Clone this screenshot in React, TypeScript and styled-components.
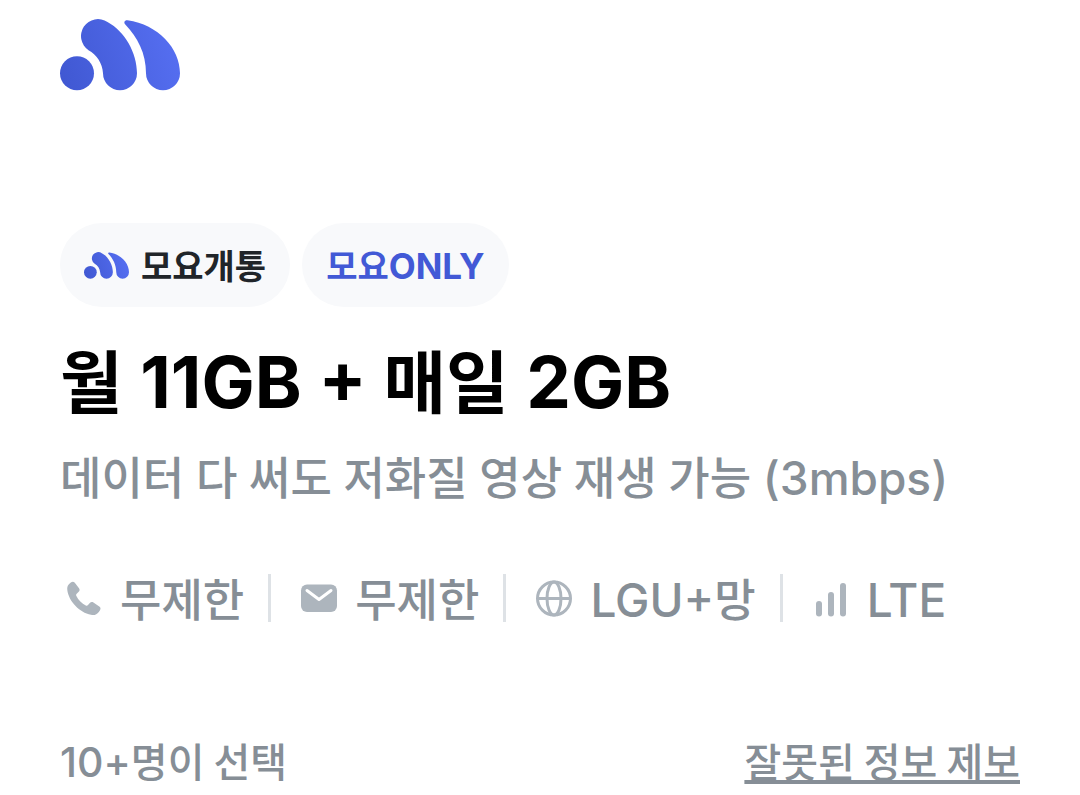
import React, { useId } from "react";
import styled, { createGlobalStyle } from "styled-components";

const color = {
  text: "#212529",
  muted: "#868e96",
  icon: "#adb5bd",
  line: "#dee2e6",
  surface: "#f8f9fb",
  brand: "#4259d6",
};

const GlobalStyle = createGlobalStyle`
  * { box-sizing: border-box; }
  body {
    margin: 0;
    background: #fff;
    color: ${color.text};
    font-family: "Noto Sans CJK KR", sans-serif;
  }
`;

const Page = styled.main`
  padding: 19px 60px 0;
`;

const Header = styled.header`
  display: flex;
  height: 72px;
  margin-bottom: 132px;
`;

const Badges = styled.div`
  display: flex;
  gap: 12px;
  margin-bottom: 27px;
`;

const Badge = styled.span<{ $brand?: boolean }>`
  display: flex;
  align-items: center;
  gap: 12px;
  height: 84px;
  padding: 0 24px;
  border-radius: 42px;
  background: ${color.surface};
  color: ${(p) => (p.$brand ? color.brand : color.text)};
  font-size: 34px;
  font-weight: 700;
  line-height: 48px;
  white-space: nowrap;
`;

const Latin = styled.span<{ $size: number }>`
  font-family: Inter, "Noto Sans CJK KR", sans-serif;
  font-size: ${(p) => p.$size}px;
  line-height: 1;
`;

const Title = styled.h1`
  margin: 0 0 12px;
  color: #000;
  font-family: "Open Sans", "Noto Sans CJK KR", sans-serif;
  font-size: 68px;
  font-weight: 700;
  line-height: 96px;
`;

const Description = styled.p`
  margin: 0 0 48px;
  color: ${color.muted};
  font-family: "Open Sans", "Noto Sans CJK KR", sans-serif;
  font-size: 45px;
  font-weight: 500;
  line-height: 72px;
`;

const Specs = styled.ul`
  display: flex;
  align-items: center;
  margin: 0 0 96px;
  padding: 0;
  list-style: none;
`;

const Spec = styled.li`
  display: flex;
  align-items: center;
  gap: 12px;
  color: ${color.muted};
  font-size: 45px;
  font-weight: 500;
  line-height: 72px;
  white-space: nowrap;

  & + &::before {
    content: "";
    width: 3px;
    height: 48px;
    margin: 0 12px 0 24px;
    background: ${color.line};
  }
`;

const Footer = styled.footer`
  display: flex;
  justify-content: space-between;
  color: ${color.muted};
  font-size: 40px;
  font-weight: 500;
  line-height: 60px;
`;

const ReportLink = styled.a`
  color: inherit;
  text-decoration: underline;
  text-decoration-thickness: 4px;
  text-decoration-skip-ink: none;
  text-underline-offset: 3px;
`;

function Logo({ width, height }: { width: number; height: number }) {
  const id = useId();
  return (
    <svg width={width} height={height} viewBox="0 0 120 72" role="img" aria-label="모요">
      <defs>
        <linearGradient id={id} gradientUnits="userSpaceOnUse" x1="0" y1="60" x2="120" y2="20">
          <stop offset="0" stopColor="#4058d2" />
          <stop offset="1" stopColor="#566ff2" />
        </linearGradient>
      </defs>
      <g fill={`url(#${id})`}>
        <circle cx="17" cy="54.3" r="17" />
        <path d="M43 54.3C42.5 44 36.5 35.5 28.5 31.2A17 17 0 0 1 47.5 3C65 12.5 77 34 77 54.3A17 17 0 0 1 43 54.3Z" />
        <path d="M86 54.3C86 34 77.5 18.5 65.3 5.500C63.3 3.300 64.8 .8 67.5 1.200C98 5.500 120 29 120 54.3A17 17 0 0 1 86 54.3Z" />
      </g>
    </svg>
  );
}

const IconSvg = styled.svg.attrs({ width: 48, height: 48, viewBox: "0 0 48 48", "aria-hidden": true })`
  flex: none;
  color: ${color.icon};
`;

const PhoneIcon = () => (
  <IconSvg fill="currentColor">
    <path d="M11.2 8.2C12.4 7.3 13.9 7.5 14.8 8.7L19 14.2C19.9 15.4 19.8 16.8 18.7 17.8L16.7 19.7C16 20.4 16 21.1 16.4 22C18.3 26 21.9 29.5 25.8 31.5C26.7 32 27.4 31.8 28 31.1L29.8 29.1C30.8 28 32.2 27.8 33.4 28.6L39.3 32.6C40.7 33.5 40.9 34.9 40 36.2L38.8 37.9C37 40.4 34.4 41.5 31 40.8C19.5 38.5 8.8 27.5 7.3 16C6.9 12.8 7.8 10.8 10.2 8.9Z" />
  </IconSvg>
);

const MailIcon = () => (
  <IconSvg>
    <rect x="6" y="10.5" width="36" height="27.5" rx="6" fill="currentColor" />
    <path d="M12 16.5L24 25.5L36 16.5" fill="none" stroke="#fff" strokeWidth="3" strokeLinecap="round" strokeLinejoin="round" />
  </IconSvg>
);

const GlobeIcon = () => (
  <IconSvg fill="none" stroke="currentColor" strokeWidth="3">
    <circle cx="24" cy="24.5" r="16.5" />
    <ellipse cx="24" cy="24.5" rx="7" ry="16.5" />
    <path d="M7.5 24.5H40.5" />
  </IconSvg>
);

const SignalIcon = () => (
  <IconSvg fill="currentColor">
    <rect x="9" y="27" width="6" height="15.5" rx="3" />
    <rect x="21" y="18" width="6" height="24.5" rx="3" />
    <rect x="33" y="9" width="6" height="33.5" rx="3" />
  </IconSvg>
);

export default function App() {
  return (
    <>
      <GlobalStyle />
      <Page>
        <Header>
          <Logo width={120} height={72} />
        </Header>
        <Badges>
          <Badge>
            <Logo width={45} height={27} />
            모요개통
          </Badge>
          <Badge $brand>
            <span>
              모요<Latin $size={35}>ONLY</Latin>
            </span>
          </Badge>
        </Badges>
        <Title>
          월 <Latin $size={71}>11GB + </Latin>매일 <Latin $size={71}>2GB</Latin>
        </Title>
        <Description>
          데이터 다 써도 저화질 영상 재생 가능 <Latin $size={46}>(3mbps)</Latin>
        </Description>
        <Specs>
          <Spec>
            <PhoneIcon />
            <span>무제한</span>
          </Spec>
          <Spec>
            <MailIcon />
            <span>무제한</span>
          </Spec>
          <Spec>
            <GlobeIcon />
            <span>
              <Latin $size={46}>LGU+</Latin>망
            </span>
          </Spec>
          <Spec>
            <SignalIcon />
            <span>
              <Latin $size={46}>LTE</Latin>
            </span>
          </Spec>
        </Specs>
        <Footer>
          <span>
            <Latin $size={41}>10+</Latin>명이 선택
          </span>
          <ReportLink href="#report">잘못된 정보 제보</ReportLink>
        </Footer>
      </Page>
    </>
  );
}
